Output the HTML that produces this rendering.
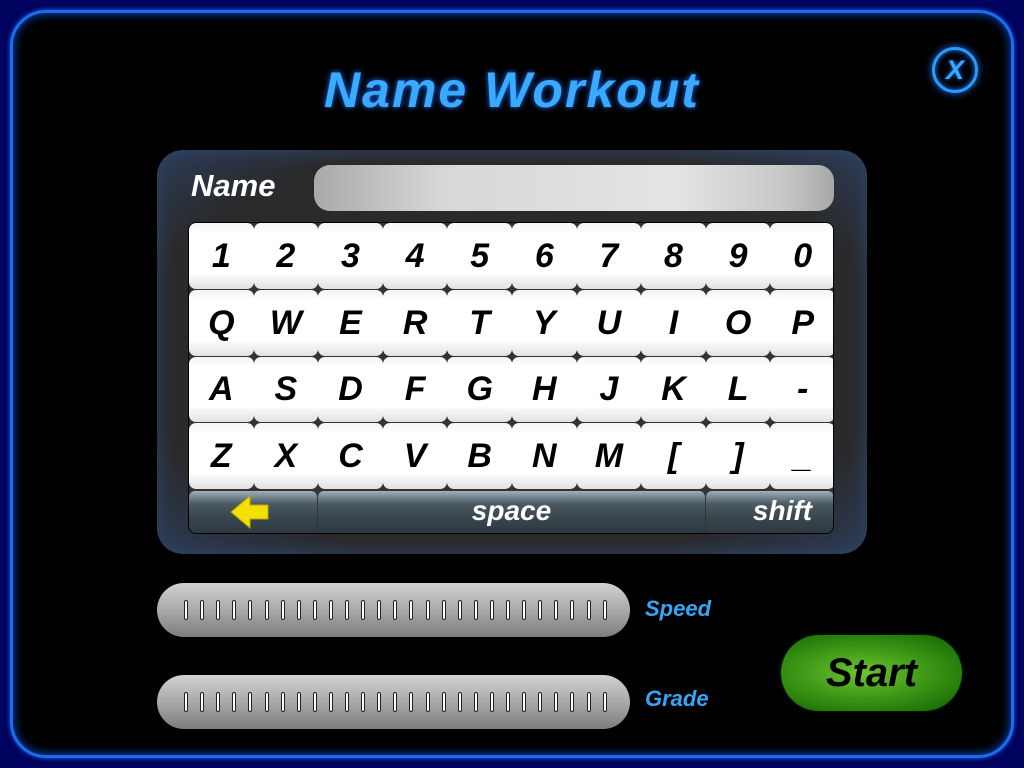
<!DOCTYPE html>
<html><head><meta charset="utf-8"><style>
*{margin:0;padding:0;box-sizing:border-box}
body{width:1024px;height:768px;background:#01045e;position:relative;overflow:hidden;font-family:"Liberation Sans",sans-serif}
.frame{position:absolute;left:10px;top:10px;width:1004px;height:748px;border-radius:36px;background:#000;border:3px solid #1a6cf0;box-shadow:inset 0 0 10px #0a4fd8,0 0 4px #1a6cf0}
.title{position:absolute;left:0;width:1024px;top:61px;text-align:center;color:#3aaaff;font:italic bold 50px "Liberation Sans",sans-serif;letter-spacing:2px;text-shadow:0 0 6px #1a70ff}
.close{position:absolute;left:932px;top:47px;width:46px;height:46px;border:3px solid #2b9cf5;border-radius:50%;box-shadow:0 0 8px #1a70ff,inset 0 0 6px #1a70ff;color:#39a8ff;font:italic bold 27px "Liberation Sans",sans-serif;text-align:center;line-height:40px;text-shadow:0 0 4px #1a70ff}
.panel{position:absolute;left:157px;top:150px;width:710px;height:404px;border-radius:26px;background:radial-gradient(ellipse at 50% 50%,#2a2a2c 75%,#2c3c58 100%);box-shadow:inset 0 0 18px #2e4466}
.nl{position:absolute;left:191px;top:168px;color:#fff;font:italic bold 31px "Liberation Sans",sans-serif}
.field{position:absolute;left:314px;top:165px;width:520px;height:46px;border-radius:16px;background:linear-gradient(90deg,#a9a9a9,#d8d8d8 25%,#e4e4e4 70%,#c8c8c8 90%,#a8a8a8)}
.kb{position:absolute;left:188px;top:222px;width:646px;height:312px;border-radius:8px;background:#333;border:1px solid #000;overflow:hidden}
.k{position:absolute;width:64.6px;border-radius:7px;background:linear-gradient(#f4f4f4,#fff 15%,#fff 75%,#e2e2e2);font:italic bold 34px "Liberation Sans",sans-serif;color:#000;text-align:center}
.b{position:absolute;top:268px;height:43px;border-radius:6px;background:linear-gradient(#9fb0bc,#4a5962 30%,#3b474f 60%,#2d3840);color:#fff;font:italic bold 28px "Liberation Sans",sans-serif;text-align:center;line-height:40px}
.sl{position:absolute;left:157px;width:473px;height:54px;border-radius:27px;background:linear-gradient(#d2d2d2,#a9a9a9 50%,#7d7d7d)}
.tk{position:absolute;top:17px;width:4px;height:20px;border:1px solid #222;background:#fff;border-radius:2px}
.lab{position:absolute;left:645px;color:#35a6f5;font:italic bold 22px "Liberation Sans",sans-serif}
.start{position:absolute;left:781px;top:635px;width:181px;height:76px;border-radius:38px;background:radial-gradient(ellipse at 45% 50%,#6cc430,#3a9414 50%,#0f6000);box-shadow:0 0 3px #0a3a00;font:italic bold 40px "Liberation Sans",sans-serif;color:#000;text-align:center;line-height:76px}
</style></head><body>
<div class="frame"></div>
<div class="title">Name Workout</div>
<div class="close">X</div>
<div class="panel"></div>
<div class="nl">Name</div>
<div class="field"></div>
<div class="kb" id="kb">
<div class="b" style="left:0;width:128px"><svg width="50" height="38" viewBox="0 0 50 38" style="margin-top:2px"><path d="M40 12 H22 V3 L3 19 L22 35 V26 H40 Z" fill="#f2e000" stroke="#b8a800" stroke-width="1"/></svg></div>
<div class="b" style="left:129px;width:387px">space</div>
<div class="b" style="left:517px;width:128px;text-align:right;padding-right:22px">shift</div>
</div>
<div class="sl" style="top:583px" id="s1"></div>
<div class="lab" style="top:596px">Speed</div>
<div class="sl" style="top:675px" id="s2"></div>
<div class="lab" style="top:686px">Grade</div>
<div class="start">Start</div>
<script>
var rows=["1234567890","QWERTYUIOP","ASDFGHJKL-","ZXCVBNM[]_"];
var tops=[0,67,134,200],hs=[66,66,65,66];
var kb=document.getElementById('kb');
rows.forEach(function(r,i){for(var j=0;j<10;j++){var d=document.createElement('div');d.className='k';d.style.left=(j*64.6)+'px';d.style.top=tops[i]+'px';d.style.height=hs[i]+'px';d.style.lineHeight=hs[i]+'px';d.textContent=r[j];kb.appendChild(d);}});
['s1','s2'].forEach(function(id){var s=document.getElementById(id);for(var i=0;i<27;i++){var t=document.createElement('div');t.className='tk';t.style.left=(27+i*16.1)+'px';s.appendChild(t);}});
</script>
</body></html>
